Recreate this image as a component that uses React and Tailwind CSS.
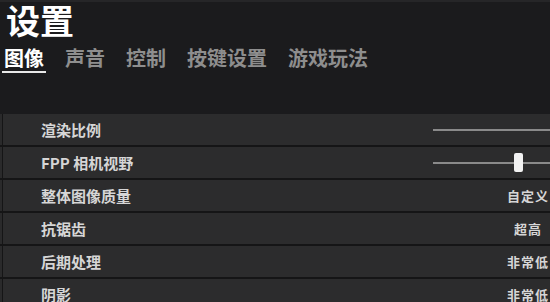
import React from "react";

const rows = [
  { label: "渲染比例", type: "slider", thumb: null },
  { label: "FPP 相机视野", type: "slider", thumb: 81 },
  { label: "整体图像质量", type: "value", value: "自定义" },
  { label: "抗锯齿", type: "value", value: "超高" },
  { label: "后期处理", type: "value", value: "非常低" },
  { label: "阴影", type: "value", value: "非常低" },
];

const tabs = ["图像", "声音", "控制", "按键设置", "游戏玩法"];

export default function App() {
  return (
    <div className="w-[550px] h-[302px] overflow-hidden bg-[#1b1b1d] font-['Noto_Sans_CJK_SC','Noto_Sans',sans-serif]">
      <div className="h-[114px] flex flex-col border-t-[2px] border-[#262628]">
        <div className="pl-[6px] -mt-[2px] h-[40px] text-[34px] leading-[40px] font-bold text-white">
          设置
        </div>
        <div className="mt-[8px] pl-[4px] flex gap-[21px]">
          {tabs.map((t, i) => (
            <div key={t} className="flex flex-col">
              <div
                className={
                  "text-[20px] leading-[20px] font-bold " +
                  (i === 0 ? "text-white" : "text-[#8e8e8e]")
                }
              >
                {t}
              </div>
              {i === 0 ? (
                <div className="mt-[3px] -mx-[2px] h-[2px] bg-[#e8e8e8]" />
              ) : null}
            </div>
          ))}
        </div>
      </div>
      <div className="flex flex-col gap-[2px] bg-[#151516]">
        {rows.map((r) => (
          <div key={r.label} className="flex h-[31px] shrink-0">
            <div className="w-[2px] bg-[#2a2a2b]" />
            <div className="w-[1px]" />
            <div className="flex-1 flex items-center bg-[#2c2c2d] pl-[38px]">
              <div className="text-[15px] leading-[18px] font-bold text-[#d6d6d6]">
                {r.label}
              </div>
              {r.type === "slider" ? (
                <div className="ml-auto w-[117px] h-[2px] bg-[#8a8a8a] relative">
                  {r.thumb !== null ? (
                    <div
                      className="absolute top-[-9px] w-[9px] h-[19px] rounded-[2px] bg-[#f2f2f2]"
                      style={{ left: r.thumb }}
                    />
                  ) : null}
                </div>
              ) : (
                <div className="ml-auto w-[44px] text-center text-[13px] leading-[18px] font-bold text-[#d6d6d6] tracking-[1px]">
                  {r.value}
                </div>
              )}
            </div>
          </div>
        ))}
      </div>
    </div>
  );
}
